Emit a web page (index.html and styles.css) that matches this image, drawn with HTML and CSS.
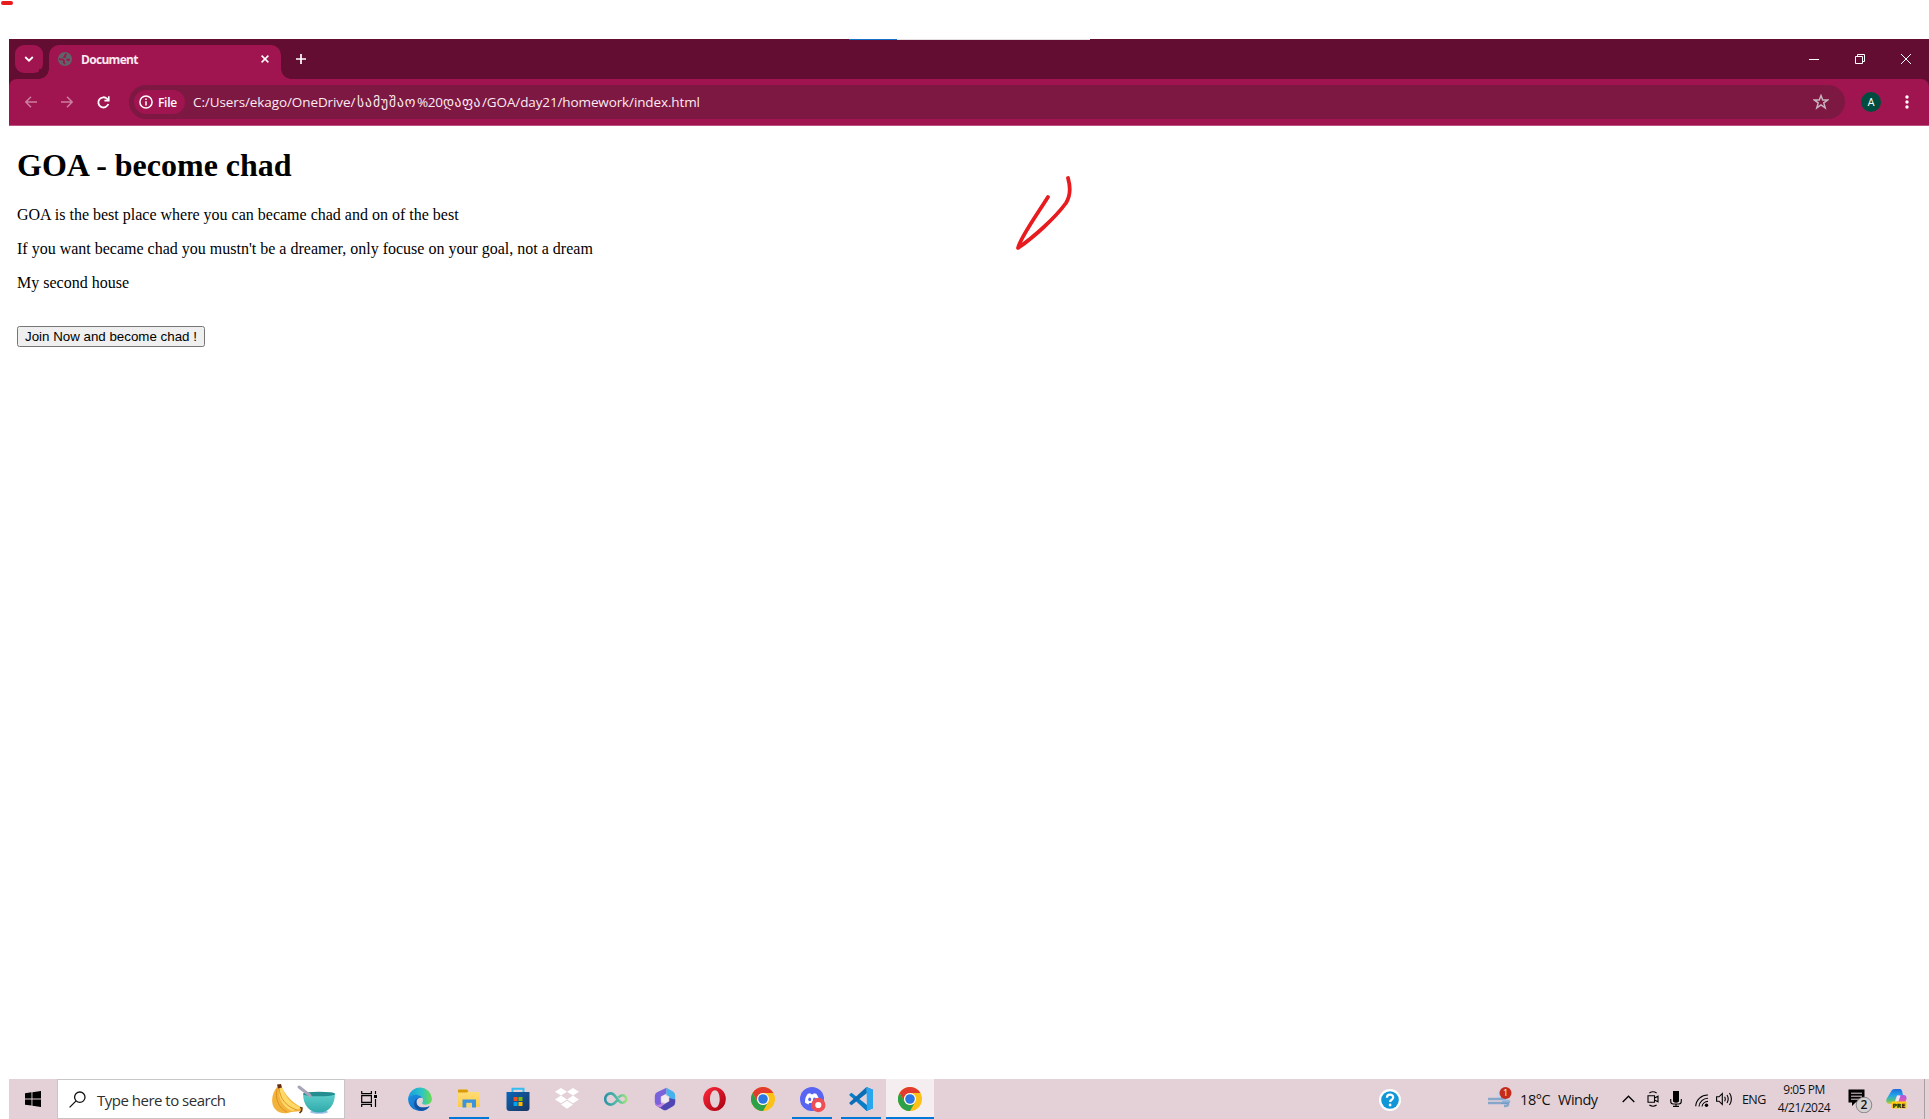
FILE: index.html
```html
<!DOCTYPE html>
<html lang="en">
<head>
<meta charset="utf-8">
<title>Document</title>
<link rel="stylesheet" href="styles.css">
</head>
<body>
<svg width="0" height="0" class="defs">
  <defs>
    <linearGradient id="edgeA" x1="0" y1="0" x2="1" y2="0"><stop offset="0" stop-color="#1a9ce0"/><stop offset=".55" stop-color="#2bc4c8"/><stop offset="1" stop-color="#6ddc4c"/></linearGradient>
    <linearGradient id="edgeB" x1="0" y1="0" x2="1" y2="1"><stop offset="0" stop-color="#1a8fe0"/><stop offset="1" stop-color="#1565c0"/></linearGradient>
    <linearGradient id="folder" x1="0" y1="0" x2="0" y2="1"><stop offset="0" stop-color="#ffe07a"/><stop offset="1" stop-color="#ffcb4a"/></linearGradient>
    <linearGradient id="bag" x1="0" y1="0" x2="1" y2="1"><stop offset="0" stop-color="#0a66b8"/><stop offset="1" stop-color="#1b3560"/></linearGradient>
    <linearGradient id="loop" x1="0" y1="0" x2="1" y2="0"><stop offset="0" stop-color="#2f93a8"/><stop offset=".6" stop-color="#54bfa4"/><stop offset="1" stop-color="#9be07c"/></linearGradient>
    <linearGradient id="opera" x1="0" y1="0" x2="1" y2="1"><stop offset="0" stop-color="#ff2a3c"/><stop offset="1" stop-color="#a5000f"/></linearGradient>
    <linearGradient id="bowl" x1="0" y1="0" x2="0" y2="1"><stop offset="0" stop-color="#5fd0cc"/><stop offset="1" stop-color="#2fa9ab"/></linearGradient>
    <linearGradient id="wind" x1="0" y1="0" x2="0" y2="1"><stop offset="0" stop-color="#a9c6e6"/><stop offset="1" stop-color="#6f96bf"/></linearGradient>
    <linearGradient id="copA" x1="0" y1="0" x2="0" y2="1"><stop offset="0" stop-color="#1b6be0"/><stop offset=".45" stop-color="#25a6e8"/><stop offset=".8" stop-color="#5cc46c"/><stop offset="1" stop-color="#e8c93a"/></linearGradient>
    <linearGradient id="copB" x1="0" y1="0" x2="0" y2="1"><stop offset="0" stop-color="#a45ce8"/><stop offset=".6" stop-color="#e858a8"/><stop offset="1" stop-color="#f58a4e"/></linearGradient>
    <symbol id="chrome" viewBox="0 0 24 24">
      <circle cx="12" cy="12" r="12" fill="#fbc116"/>
      <path d="M1.6 6A12 12 0 0 1 22.4 6H12a6 6 0 0 0-5.2 9z" fill="#e33b2e"/>
      <path d="M1.6 6A12 12 0 0 0 12 24l5.2-9A6 6 0 0 1 6.8 15z" fill="#2da04a"/>
      <circle cx="12" cy="12" r="6" fill="#fff"/><circle cx="12" cy="12" r="4.8" fill="#2b78e4"/>
    </symbol>
  </defs>
</svg>
<div class="desktop">
  <div class="window">
    <div class="tabstrip">
      <span class="tab-search"><svg width="10" height="6" viewBox="0 0 10 6"><path d="M1.2 1 5 4.7 8.8 1" fill="none" stroke="#fff" stroke-width="1.8"/></svg></span>
      <div class="tab">
        <svg width="14" height="14" viewBox="0 0 14 14"><circle cx="7" cy="7" r="7" fill="#606367"/><path d="M1 7.4 4.6 7.4 6.2 9.2 5.6 10.4 7.2 12M8.5 1.8 7 3.2 7.2 4.8 5.2 5.2M11.6 7.2 10.3 8.4 8.6 6.8" fill="none" stroke="#a0144f" stroke-width="1.6"/></svg>
        <span class="tab-title">Document</span>
        <svg width="8" height="8" viewBox="0 0 8 8"><path d="M.6.6 7.4 7.4M7.4.6.6 7.4" stroke="#fff" stroke-width="1.5"/></svg>
      </div>
      <svg class="newtab" width="10" height="10" viewBox="0 0 10 10"><path d="M5 0V10M0 5H10" stroke="#fff" stroke-width="1.7"/></svg>
      <div class="caption">
        <svg width="10" height="10" viewBox="0 0 10 10"><path d="M0 5.5H10" stroke="#fff"/></svg>
        <svg width="10" height="10" viewBox="0 0 10 10"><path d="M.5 2.5H7.5V9.5H.5zM2.5 2.5V.5H9.5V7.5H7.5" fill="none" stroke="#fff"/></svg>
        <svg width="10" height="10" viewBox="0 0 10 10"><path d="M0 0 10 10M10 0 0 10" stroke="#fff"/></svg>
      </div>
      <i class="edge-line"></i>
    </div>
    <div class="toolbar-wrap"><div class="toolbar">
      <svg class="nav dim" width="12" height="12" viewBox="0 0 12 12"><path d="M12 6H1M6 .8.9 6 6 11.2" fill="none" stroke="#fff" stroke-width="1.5"/></svg>
      <svg class="nav dim" width="12" height="12" viewBox="0 0 12 12"><path d="M0 6H11M6 .8 11.1 6 6 11.2" fill="none" stroke="#fff" stroke-width="1.5"/></svg>
      <svg class="nav" width="13" height="13" viewBox="0 0 13 13"><path d="M11.3 8A5.1 5.1 0 1 1 10.2 2.9L11.6 4.4" fill="none" stroke="#fff" stroke-width="1.8"/><path d="M12.6.2V5.4H7.4V3.8H11V.2z" fill="#fff"/></svg>
      <div class="omnibox">
        <span class="chip"><svg width="14" height="14" viewBox="0 0 14 14"><circle cx="7" cy="7" r="6.1" fill="none" stroke="#fff" stroke-width="1.5"/><path d="M7 6.2V10.4M7 3.6V5" stroke="#fff" stroke-width="1.5"/></svg>File</span>
        <span class="url"><span class="u1">C:/Users/ekago/OneDrive/</span><span class="u2">სამუშაო</span><span class="u3">%20</span><span class="u4">დაფა</span><span class="u5">/GOA/day21/homework/index.html</span></span>
        <svg width="16" height="16" viewBox="0 0 16 16"><path d="M8 1.6 9.7 6H14.6L10.8 8.9 12.2 13.9 8 11 3.8 13.9 5.2 8.9 1.4 6H6.3z" fill="none" stroke="#c9b4be" stroke-width="1.5"/></svg>
      </div>
      <span class="avatar">A</span>
      <svg width="4" height="14" viewBox="0 0 4 14"><circle cx="2" cy="2" r="1.7" fill="#fff"/><circle cx="2" cy="7" r="1.7" fill="#fff"/><circle cx="2" cy="12" r="1.7" fill="#fff"/></svg>
    </div></div>
    <main class="page">
      <h1>GOA - become chad</h1>
      <p>GOA is the best place where you can became chad and on of the best</p>
      <p>If you want became chad you mustn't be a dreamer, only focuse on your goal, not a dream</p>
      <p>My second house</p>
      <br>
      <button>Join Now and become chad !</button>
    </main>
    <div class="taskbar">
      <span class="start"><svg width="16" height="16" viewBox="0 0 16 16"><path d="M0 2.2 6.5 1.3V7.5H0zM7.4 1.2 16 0V7.5H7.4zM0 8.4H6.5V14.6L0 13.7zM7.4 8.4H16V16L7.4 14.8z"/></svg></span>
      <div class="search">
        <svg width="17" height="17" viewBox="0 0 17 17"><circle cx="10.8" cy="6.2" r="5.2" fill="none" stroke="#111" stroke-width="1.3"/><path d="M7.1 9.9.6 16.4" stroke="#111" stroke-width="1.3"/></svg>
        <span>Type here to search</span>
        <svg width="66" height="32" viewBox="0 0 66 32">
          <path d="M6 4C1 10-1 20 4 26 8 31 15 31 20 29L31 28 30 24C24 21 17 16 11 5z" fill="#f3b33a"/>
          <path d="M8 5C7 14 11 24 21 28L31 25C21 21 15 16 11 4z" fill="#ffd968"/>
          <path d="M6 6C4 15 7 25 16 29M8 5C9 15 14 23 26 27" fill="none" stroke="#d98d1f" stroke-width=".9"/>
          <path d="M6 1.5 10 1 11 4.5 7 5.5z" fill="#6b2d12"/><path d="M29 24.5 31 25 30.5 28 28.5 30" fill="none" stroke="#6b3a12" stroke-width="1.6"/>
          <ellipse cx="48" cy="29" rx="9" ry="1.8" fill="#9bbfe6"/>
          <path d="M32 10.5C32 22 38 29.5 48 29.5S64 22 64 10.5z" fill="url(#bowl)"/><ellipse cx="48" cy="11" rx="16" ry="2.3" fill="#238d90"/>
          <path d="M28 4 39 12.5" stroke="#a9a3b8" stroke-width="3" stroke-linecap="round"/>
        </svg>
      </div>
      <div class="apps">
        <span class="app task-view"><svg width="17" height="16" viewBox="0 0 17 16"><path d="M.7 0V2.6H10.4V0M.7 16V13.4H10.4V16M.7 4.6H10.4V11.4H.7zM14.5 0V3M14.5 8V16" fill="none" stroke="#000" stroke-width="1.2"/><path d="M13 4H16V7H13z"/></svg></span>
        <span class="app"><svg width="24" height="24" viewBox="0 0 24 24"><path d="M.3 10A12 12 0 0 1 24 11.6C24 16 20.6 17.8 17.5 17.8 15 17.8 13.5 16.7 14.5 15.2 16 12 14 8.2 9 8.2 4.5 8.2 1 10.5.2 13z" fill="url(#edgeA)"/><path d="M.1 12.4C1 9 5 7.5 8.5 7.7 12 8 14 9.6 14.3 11 11 10 8.2 12.2 8.4 15.2 8.6 19.5 13.5 22.5 21.6 19.2A12 12 0 0 1 .1 12.4z" fill="url(#edgeB)"/><path d="M8.4 14.5C8.3 20 14.5 22.3 21.7 19 18 25.5 7.5 25.3 6.2 17.5 5.8 13.5 9 10.6 13 10.3 10 10.7 8.5 12.5 8.4 14.5z" fill="#1453a2"/></svg></span>
        <span class="app running"><svg width="22" height="20" viewBox="0 0 22 20"><path d="M0 2V1Q0 .5 1 .5H9L11 3H22V18H0z" fill="url(#folder)"/><path d="M0 1.2Q0 .5 1 .5H9L10.5 2 9 3.6H0z" fill="#d99b0b"/><path d="M4.5 10.5H18V18.5H14V14H8.5V18.5H4.5z" fill="#3b93dd"/><path d="M8.5 13.8H14V18.5H8.5z" fill="#f7d274"/></svg></span>
        <span class="app"><svg width="24" height="24" viewBox="0 0 24 24"><path d="M6.5 6V1.7H17.5V6" fill="none" stroke="#35bdf0" stroke-width="2"/><path d="M.5 5H23.5V21Q23.5 24 20.5 24H3.5Q.5 24 .5 21z" fill="url(#bag)"/><path d="M7.6 10H11.6V14H7.6z" fill="#f25022"/><path d="M12.5 10H16.5V14H12.5z" fill="#7fba00"/><path d="M7.6 15H11.6V19H7.6z" fill="#00a4ef"/><path d="M12.5 15H16.5V19H12.5z" fill="#ffb900"/></svg></span>
        <span class="app"><svg width="24" height="22" viewBox="0 0 24 22"><path d="M6 0 12 3.8 6 7.6 0 3.8zM18 0 24 3.8 18 7.6 12 3.8zM6 7.6 12 11.4 6 15.2 0 11.4zM18 7.6 24 11.4 18 15.2 12 11.4zM12 12.8 18 16.6 12 20.8 6 16.6z" fill="#fff"/></svg></span>
        <span class="app"><svg width="24" height="14" viewBox="0 0 24 14"><path d="M13 8.5C11 11 9.5 12.6 6.8 12.6A5.6 5.6 0 0 1 6.8 1.4C12 1.4 13.2 10.8 18.4 10.8A3.8 3.8 0 0 0 18.4 3.2C16.5 3.2 15.4 4.4 14.5 5.5" fill="none" stroke="url(#loop)" stroke-width="2.6"/></svg></span>
        <span class="app"><svg width="22" height="24" viewBox="0 0 22 24"><path d="M12.5.8 3 5.2Q.8 6.3.8 9V15Q.8 18 3 19.2L6 20.5V19L8 17.3 6.8 15V9.5L12.5 6.5z" fill="#7a62dc"/><path d="M12.5.8 19 4.6Q21.2 6 21.2 8.5V14.5L15.3 12V9.5L12.5 8z" fill="#45b2ee"/><path d="M21.2 12.5V15.5Q21.2 18 19 19.2L13 22.7Q11 23.8 9 22.7L4.5 20 11 16.8 15.3 14.3V11z" fill="#5046b3"/><path d="M.8 14Q1 18 4.5 18L8 16.2 11 16.8 6.5 20.6 3 19.2Q.8 18 .8 14z" fill="#c084e2"/><path d="M11 8 14.6 10V14L11 16 7.4 14V10z" fill="#f2e8f0"/></svg></span>
        <span class="app"><svg width="23" height="24" viewBox="0 0 23 24"><path fill-rule="evenodd" d="M11.5 0A11.3 12 0 1 0 11.5 24 11.3 12 0 1 0 11.5 0zM12 3.2C15 3.2 16.7 7.5 16.7 12S15 20.8 12 20.8 7 16.5 7 12 9 3.2 12 3.2z" fill="url(#opera)"/></svg></span>
        <span class="app"><svg width="24" height="24"><use href="#chrome"/></svg></span>
        <span class="app running discord"><svg width="26" height="26" viewBox="0 0 26 26"><circle cx="12" cy="12" r="12" fill="#5865f2"/><path d="M7.8 6.7 10.5 6.2 11 7.2H13.2L13.7 6.2 16.3 6.7C18.5 9.5 19.4 12.5 19.2 15.8L15.8 17.5 14.9 16H9.3L8.4 17.5 5 15.8C4.8 12.5 5.6 9.5 7.8 6.7z" fill="#fff"/><ellipse cx="9.7" cy="12.4" rx="1.5" ry="1.8" fill="#5865f2"/><ellipse cx="14.5" cy="12.4" rx="1.5" ry="1.8" fill="#5865f2"/><circle cx="18.3" cy="18" r="7.2" fill="#ed4f55"/><circle cx="18.3" cy="18" r="3.1" fill="#fff"/></svg></span>
        <span class="app running"><svg width="24" height="24" viewBox="0 0 24 24"><path d="M17.5 0 24 2.8V21.2L17.5 24 3 10.5.5 8.4V7.3L2.5 5.8 18 18V6z" fill="#0a7dc8"/><path d="M18 6 2.5 18.2.5 16.7V15.6L17.5 0z" fill="#0b6db5"/><path d="M17.5 0 24 2.8V21.2L17.5 24 18 22z" fill="#2aa6ef"/></svg></span>
        <span class="app running active"><svg width="24" height="24"><use href="#chrome"/></svg></span>
      </div>
      <div class="tray">
        <span class="help"><svg width="22" height="22" viewBox="0 0 22 22"><circle cx="11" cy="11" r="11" fill="#fff"/><circle cx="11" cy="11" r="8.8" fill="#1196d8"/><path d="M7.9 8.8C7.9 4.6 14.3 4.8 14.2 8.5 14.1 10.8 11.1 10.7 11.1 13" fill="none" stroke="#fff" stroke-width="2.2"/><circle cx="11.1" cy="16" r="1.4" fill="#fff"/></svg></span>
        <span class="weather"><svg width="25" height="22" viewBox="0 0 25 22"><circle cx="14" cy="8" r="4.5" fill="#c5d5ea"/><path d="M1 12H19M1 16H21Q22 19.4 17 19" fill="none" stroke="#86a6ca" stroke-width="2.4"/><path d="M16 12.5H23Q24 16 21 17H14z" fill="url(#wind)"/><circle cx="18.5" cy="6" r="6" fill="#c42b1c"/></svg><b>1</b></span>
        <span class="temp">18°C</span><span class="cond">Windy</span>
        <svg class="up" width="13" height="8" viewBox="0 0 13 8"><path d="M.7 7 6.5 1.2 12.3 7" fill="none" stroke="#000" stroke-width="1.3"/></svg>
        <svg class="cam" width="12" height="16" viewBox="0 0 12 16"><path d="M1 4.7H7.5V11.3H1zM7.5 7 11 5.2V10.8L7.5 9M2.4 2Q6-.5 9.6 2M2.4 14Q6 16.5 9.6 14" fill="none" stroke="#000" stroke-width="1.1"/></svg>
        <svg class="mic" width="12" height="16" viewBox="0 0 12 16"><path d="M3 0H9V10.5Q6 13 3 10.5z"/><path d="M.7 8V10Q.7 13 3 13H9Q11.3 13 11.3 10V8M6 13V15.4M3 15.4H9" fill="none" stroke="#000" stroke-width="1.1"/></svg>
        <svg class="wifi" width="14" height="13" viewBox="0 0 14 13"><path d="M.7 12.3A12 12 0 0 1 13 1M4 12.5A9 9 0 0 1 13 4.2M7 12.5A6 6 0 0 1 13 7.4" fill="none" stroke="#000" stroke-width="1.1"/><circle cx="11.5" cy="11.3" r="1.7"/></svg>
        <svg class="vol" width="17" height="14" viewBox="0 0 17 14"><path d="M.6 4.8H3L6.3 1.5V12.5L3 9.2H.6zM8.6 4.8Q10 7 8.6 9.2M11 3Q13.4 7 11 11M13.5 1Q17.3 7 13.5 13" fill="none" stroke="#000" stroke-width="1.1"/></svg>
        <span class="lang">ENG</span>
        <span class="clock"><span class="time">9:05 PM</span><span class="date">4/21/2024</span></span>
        <span class="notes"><svg width="25" height="24" viewBox="0 0 25 24"><path d="M.5.5H16.5V13.5H7.5L4 17V13.5H.5z"/><path d="M3 4.2H14M3 7.2H14M3 10.2H11" stroke="#e4d1d8"/><circle cx="16" cy="16" r="7.8" fill="#d5d0d2" stroke="#8a8688"/></svg><b>2</b></span>
        <span class="copilot"><svg width="21" height="20" viewBox="0 0 21 20"><path d="M6 1Q7 0 9 0H14Q16 .3 16.5 4L17 6H12.5Q11 6 10.3 8L8 15H3Q-.5 14.5.5 10z" fill="url(#copA)"/><path d="M12.5 6H18Q21 6.5 20.5 10L18.5 15Q18 17 15 17H9.5L11 11z" fill="url(#copB)"/><path d="M11.5 6.5H14.5L12.5 12.5H9.5z" fill="#f1e5f0"/><rect x="5.5" y="12.5" width="15" height="7" rx="1" fill="#ffcc14"/></svg><b>PRE</b></span>
      </div>
    </div>
  </div>
  <svg class="ink" width="1929" height="300" viewBox="0 0 1929 300"><path d="M3 3H11" stroke-width="4"/><path d="M1048 197C1038 213 1020 238 1018 248C1034 237 1055 218 1066 203C1071 195 1070 185 1068 178" stroke-width="3.8"/></svg>
</div>
</body>
</html>
```
FILE: styles.css
```css
body { margin: 0; background: #fff; overflow: hidden; }
.defs { position: absolute; }
.desktop { position: relative; box-sizing: border-box; width: 1929px; height: 1119px; padding: 39px 0 0 9px; }
.window { display: flex; flex-direction: column; height: 1080px; font-family: "Open Sans", "Noto Sans", sans-serif; }
svg { flex: none; display: block; }
.tabstrip { position: relative; display: flex; box-sizing: border-box; height: 40px; padding: 6px 0 0 6px; background: #630d32; }
.tab-search { display: flex; align-items: center; justify-content: center; width: 28px; height: 28px; border-radius: 9px; background: #a0144f; }
.tab { position: relative; display: flex; align-items: center; box-sizing: border-box; width: 232px; height: 34px; margin-left: 6px; padding: 0 12px 6px 9px; border-radius: 10px 10px 0 0; background: #a0144f; }
.tab::before, .tab::after { content: ""; position: absolute; bottom: 0; width: 10px; height: 10px; }
.tab::before { left: -10px; background: radial-gradient(circle at 0 0, #630d32 9.5px, #a0144f 10px); }
.tab::after { right: -10px; background: radial-gradient(circle at 100% 0, #630d32 9.5px, #a0144f 10px); }
.tab-title { flex: 1; margin-left: 9px; color: #fbeaf1; font-size: 12px; font-weight: 700; letter-spacing: -.7px; line-height: 20px; padding-top: 1px; }
.newtab { margin: 9px 0 0 15px; }
.caption { display: flex; gap: 36px; margin: 9px 18px 0 auto; }
.edge-line { position: absolute; left: 840px; top: 0; width: 241px; height: 1px; background: linear-gradient(90deg, #1670c8 48px, #e6dde1 48px); }
.toolbar-wrap { background: #630d32; }
.toolbar { display: flex; align-items: center; box-sizing: border-box; height: 47px; padding: 0 20px 1px 16px; background: linear-gradient(#a0144f 46px, #bc5283 46px); border-radius: 8px 8px 0 0; }
.nav { margin-right: 24px; }
.dim { opacity: .45; }
.omnibox { display: flex; align-items: center; box-sizing: border-box; width: 1718px; height: 34px; margin-left: -5px; padding: 0 16px 0 5px; border-radius: 17px; background: #7d1843; }
.chip { display: flex; align-items: center; gap: 5px; box-sizing: border-box; width: 51px; height: 24px; padding-left: 5px; border-radius: 12px; background: #a0144f; color: #fff; font-size: 12px; font-weight: 600; letter-spacing: -.3px; }
.url { display: flex; flex: 1; margin-left: 8px; color: #fbeaf1; font-size: 13.5px; line-height: 20px; white-space: nowrap; }
.u1 { width: 164px; letter-spacing: -.1px; }
.u2 { width: 60px; font-family: "DejaVu Sans", sans-serif; font-size: 13.5px; letter-spacing: 1px; }
.u3 { width: 26px; letter-spacing: -.3px; }
.u4 { width: 39px; font-family: "DejaVu Sans", sans-serif; font-size: 13.5px; letter-spacing: .5px; }
.u5 { letter-spacing: -.12px; }
.avatar { width: 20px; height: 20px; margin: 0 24px 0 16px; border-radius: 50%; background: #004d40; color: #fff; font: 11px/21px Roboto, sans-serif; text-align: center; }
.page { flex: 1; padding: 0 8px; color: #000; font: 16px "Liberation Serif", serif; }
.page h1 { margin: 21.44px 0; font-size: 32px; }
.page p { margin: 16px 0; }
.page button { font: 13.333px "Liberation Sans", sans-serif; }
.taskbar { display: flex; height: 40px; background: #e4d1d8; }
.start { display: flex; align-items: center; justify-content: center; width: 48px; }
.search { display: flex; align-items: center; box-sizing: border-box; width: 288px; padding: 0 7px 0 11px; border: 1px solid #c9c6c8; background: #fff; color: #2f2f2f; font-size: 15px; }
.search span { flex: 1; margin-left: 11px; letter-spacing: -.5px; padding-top: 1px; }
.apps { display: flex; gap: 1px; margin-left: 2px; }
.app { display: flex; align-items: center; justify-content: center; box-sizing: border-box; width: 48px; height: 40px; }
.task-view { padding-right: 3px; }
.discord { padding: 2px 0 0 2px; }
.running { background: linear-gradient(#0078d7, #0078d7) center bottom / 40px 2px no-repeat; }
.active { background: linear-gradient(#0078d7, #0078d7) center bottom / 48px 2px no-repeat, #f5eef1; }
.tray { display: flex; align-items: center; box-sizing: border-box; flex: 1; margin-left: 445px; border-right: 1px solid #aa9ea3; margin-right: 4px; color: #111; font-size: 14.5px; white-space: nowrap; }
.help { width: 108px; padding-top: 2px; }
.weather, .notes, .copilot { position: relative; }
.weather { width: 33px; margin-top: -3px; }
.weather b { position: absolute; left: 12.5px; top: 0; width: 12px; color: #fff; font-size: 9px; line-height: 12px; font-weight: 400; text-align: center; }
.temp { width: 38px; letter-spacing: -.4px; }
.cond { width: 64px; letter-spacing: -.5px; }
.cam { margin-left: 12px; }
.mic { margin-left: 11px; }
.wifi { margin: 3px 0 0 13px; }
.vol { margin-left: 7px; }
.lang { width: 35px; margin-left: 9px; font-size: 12.5px; letter-spacing: -.6px; }
.clock { display: flex; flex-direction: column; align-items: center; width: 54px; font-size: 12px; line-height: 18px; letter-spacing: -.5px; }
.notes { margin: 4px 0 0 17px; }
.notes b { position: absolute; left: 8px; top: 8px; width: 16px; font-size: 12px; line-height: 16px; font-weight: 600; text-align: center; }
.copilot { margin-left: 13px; }
.copilot b { position: absolute; left: 5.5px; top: 12.5px; width: 15px; font: bold 6px/7px "DejaVu Sans", sans-serif; text-align: center; }
.ink { position: absolute; left: 0; top: 0; fill: none; stroke: #e81b1e; stroke-linecap: round; stroke-linejoin: round; pointer-events: none; }
```
